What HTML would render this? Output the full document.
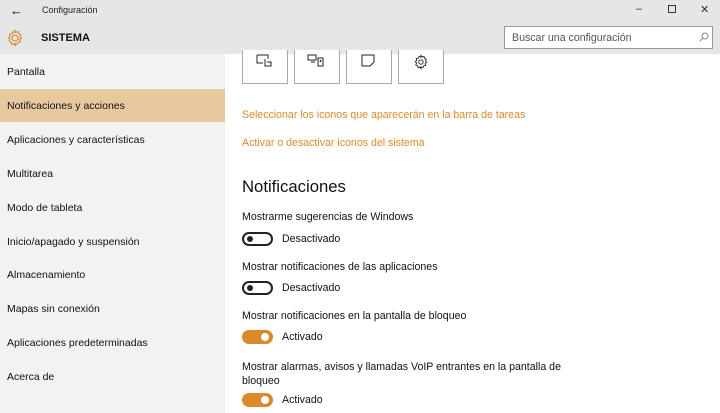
<!DOCTYPE html>
<html><head><meta charset="utf-8"><style>
*{margin:0;padding:0;box-sizing:border-box}
body{width:720px;height:413px;overflow:hidden;font-family:"Liberation Sans",sans-serif;background:#fff;position:relative;color:#000}
.hdr{position:absolute;left:0;top:0;width:720px;height:54px;background:#e6e6e6}
.side{position:absolute;left:0;top:54px;width:225px;height:359px;background:#f2f2f2}
.it{position:absolute;left:7px;font-size:10.5px;color:#111}
.sel{position:absolute;left:0;top:89px;width:225px;height:33px;background:#e7c9a0}
.box{position:absolute;top:50px;width:46px;height:34px;border:1px solid #aaa;border-top:none;background:#fff}
.lnk{position:absolute;left:242px;font-size:10.6px;color:#d98b2b}
.t{position:absolute;left:242px;font-size:10.6px;color:#111}
.tg{position:absolute;left:242px;width:31px;height:14px;border-radius:7px}
.off{border:2px solid #222;background:#fff}
.off::after{content:"";position:absolute;left:3px;top:2px;width:6px;height:6px;border-radius:50%;background:#222}
.on{background:#d98b2b}
.on::after{content:"";position:absolute;right:4px;top:3px;width:8px;height:8px;border-radius:50%;background:#fff}
.lb{position:absolute;left:282px;font-size:10.6px;color:#111}
</style></head><body>
<div class="hdr"></div>
<div style="position:absolute;left:10px;top:3px;font-size:13px">&#8592;</div>
<div style="position:absolute;left:42px;top:5px;font-size:9px;color:#222">Configuración</div>
<svg style="position:absolute;left:6px;top:29px" width="18" height="18" viewBox="0 0 18 18"><circle cx="9" cy="9" r="3" fill="none" stroke="#d98b2b" stroke-width="1.2"/><path d="M9 1.5l1.3 1.8 2.2-.6.3 2.2 2.1.9-.9 2.1 1.5 1.5-1.8 1.3.6 2.2-2.2.3-.9 2.1-2.1-.9L9 16.5l-1.3-1.8-2.2.6-.3-2.2-2.1-.9.9-2.1L2.5 8.6l1.8-1.3-.6-2.2 2.2-.3.9-2.1 2.1.9z" fill="none" stroke="#d98b2b" stroke-width="1.1"/></svg>
<div style="position:absolute;left:41px;top:32px;font-size:11px;font-weight:bold;color:#111">SISTEMA</div>
<div style="position:absolute;left:636px;top:3px;font-size:11px;color:#333">&#8211;</div>
<div style="position:absolute;left:668px;top:5px;width:8px;height:8px;border:1px solid #333"></div>
<div style="position:absolute;left:700px;top:3px;font-size:11px;color:#333">&#10005;</div>
<div style="position:absolute;left:504px;top:26px;width:209px;height:23px;border:1px solid #999;background:#fff;font-size:10.6px;color:#555;padding:5px 7px">Buscar una configuración</div>
<svg style="position:absolute;left:699px;top:32px" width="10" height="10" viewBox="0 0 10 10"><circle cx="6" cy="4" r="3" fill="none" stroke="#888"/><path d="M4 6L1 9" stroke="#888"/></svg>
<div class="side"></div>
<div class="sel"></div>
<div class="it" style="top:66px">Pantalla</div>
<div class="it" style="top:100px">Notificaciones y acciones</div>
<div class="it" style="top:134px">Aplicaciones y características</div>
<div class="it" style="top:168px">Multitarea</div>
<div class="it" style="top:202px">Modo de tableta</div>
<div class="it" style="top:236px">Inicio/apagado y suspensión</div>
<div class="it" style="top:269px">Almacenamiento</div>
<div class="it" style="top:303px">Mapas sin conexión</div>
<div class="it" style="top:337px">Aplicaciones predeterminadas</div>
<div class="it" style="top:371px">Acerca de</div>
<div class="box" style="left:242px"></div>
<div class="box" style="left:294px"></div>
<div class="box" style="left:346px"></div>
<div class="box" style="left:398px"></div>
<svg style="position:absolute;left:256px;top:54px" width="18" height="14"><path d="M1 1v8h6M1 1h11v4" fill="none" stroke="#222"/><path d="M9 5v7h6V8h-4" fill="none" stroke="#222"/></svg>
<svg style="position:absolute;left:307px;top:54px" width="20" height="14"><path d="M1 1h8v5H1zM4 8h4M11 4h5v8h-5z" fill="none" stroke="#222"/><circle cx="13.5" cy="7" r="1" fill="#222"/></svg>
<svg style="position:absolute;left:361px;top:54px" width="16" height="14"><path d="M1 1h12v7l-4 4H1z" fill="none" stroke="#222"/></svg>
<svg style="position:absolute;left:413px;top:54px" width="16" height="16" viewBox="0 0 18 18"><circle cx="9" cy="9" r="2.5" fill="none" stroke="#222"/><path d="M9 1.5l1.3 1.8 2.2-.6.3 2.2 2.1.9-.9 2.1 1.5 1.5-1.8 1.3.6 2.2-2.2.3-.9 2.1-2.1-.9L9 16.5l-1.3-1.8-2.2.6-.3-2.2-2.1-.9.9-2.1L2.5 8.6l1.8-1.3-.6-2.2 2.2-.3.9-2.1 2.1.9z" fill="none" stroke="#222"/></svg>
<div class="lnk" style="top:109px">Seleccionar los iconos que aparecerán en la barra de tareas</div>
<div class="lnk" style="top:137px">Activar o desactivar iconos del sistema</div>
<div style="position:absolute;left:242px;top:177px;font-size:16.7px;color:#111">Notificaciones</div>
<div class="t" style="top:211px">Mostrarme sugerencias de Windows</div>
<div class="tg off" style="top:232px"></div><div class="lb" style="top:233px">Desactivado</div>
<div class="t" style="top:261px">Mostrar notificaciones de las aplicaciones</div>
<div class="tg off" style="top:281px"></div><div class="lb" style="top:282px">Desactivado</div>
<div class="t" style="top:310px">Mostrar notificaciones en la pantalla de bloqueo</div>
<div class="tg on" style="top:330px"></div><div class="lb" style="top:331px">Activado</div>
<div class="t" style="top:360px;line-height:14px">Mostrar alarmas, avisos y llamadas VoIP entrantes en la pantalla de<br>bloqueo</div>
<div class="tg on" style="top:393px"></div><div class="lb" style="top:394px">Activado</div>
</body></html>
